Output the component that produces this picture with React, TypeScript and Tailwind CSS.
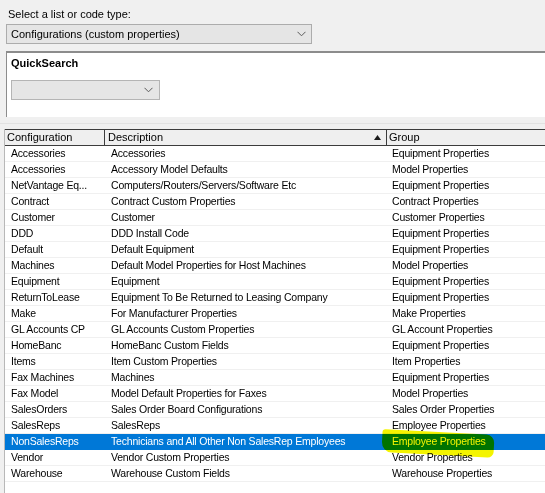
import React from "react";

interface Row {
  name: string;
  description: string;
  group: string;
  selected?: boolean;
}

const rows: Row[] = [
  { name: "Accessories", description: "Accessories", group: "Equipment Properties" },
  { name: "Accessories", description: "Accessory Model Defaults", group: "Model Properties" },
  { name: "NetVantage Eq...", description: "Computers/Routers/Servers/Software Etc", group: "Equipment Properties" },
  { name: "Contract", description: "Contract Custom Properties", group: "Contract Properties" },
  { name: "Customer", description: "Customer", group: "Customer Properties" },
  { name: "DDD", description: "DDD Install Code", group: "Equipment Properties" },
  { name: "Default", description: "Default Equipment", group: "Equipment Properties" },
  { name: "Machines", description: "Default Model Properties for Host Machines", group: "Model Properties" },
  { name: "Equipment", description: "Equipment", group: "Equipment Properties" },
  { name: "ReturnToLease", description: "Equipment To Be Returned to Leasing Company", group: "Equipment Properties" },
  { name: "Make", description: "For Manufacturer Properties", group: "Make Properties" },
  { name: "GL Accounts CP", description: "GL Accounts Custom Properties", group: "GL Account Properties" },
  { name: "HomeBanc", description: "HomeBanc Custom Fields", group: "Equipment Properties" },
  { name: "Items", description: "Item Custom Properties", group: "Item Properties" },
  { name: "Fax Machines", description: "Machines", group: "Equipment Properties" },
  { name: "Fax Model", description: "Model Default Properties for Faxes", group: "Model Properties" },
  { name: "SalesOrders", description: "Sales Order Board Configurations", group: "Sales Order Properties" },
  { name: "SalesReps", description: "SalesReps", group: "Employee Properties" },
  { name: "NonSalesReps", description: "Technicians and All Other Non SalesRep Employees", group: "Employee Properties", selected: true },
  { name: "Vendor", description: "Vendor Custom Properties", group: "Vendor Properties" },
  { name: "Warehouse", description: "Warehouse Custom Fields", group: "Warehouse Properties" },
];

function Chevron() {
  return (
    <svg width="9" height="6" viewBox="0 0 9 6" className="shrink-0">
      <polyline points="0.5,0.8 4.5,4.8 8.5,0.8" fill="none" stroke="#5a5a5a" strokeWidth="1" />
    </svg>
  );
}

export default function App() {
  return (
    <div className="relative w-[545px] h-[493px] overflow-hidden bg-[#f0f0f0] text-black font-['Liberation_Sans',Arial,sans-serif]">
      <div className="pl-[8px] pt-[8px] text-[11px] leading-[12px]">Select a list or code type:</div>

      {/* list type combo */}
      <div className="ml-[6px] mt-[4px] w-[306px] h-[20px] flex items-center justify-between pl-[4px] pr-[5px] bg-[#e5e5e5] border border-[#acacac] text-[11px]">
        <span>Configurations (custom properties)</span>
        <Chevron />
      </div>

      {/* QuickSearch panel */}
      <div className="ml-[6px] mt-[7px] h-[66px] bg-white border-t-2 border-l border-[#8c8c8c] pl-[4px] pt-[4px]">
        <div className="text-[11px] leading-[13px] font-bold">QuickSearch</div>
        <div className="mt-[10px] w-[149px] h-[20px] flex items-center justify-end pr-[6px] bg-[#e5e5e5] border border-[#b4b4b4]">
          <Chevron />
        </div>
      </div>

      <div className="h-[6px]" />
      <div className="h-px bg-[#e2e2e2]" />
      <div className="h-[5px]" />

      {/* grid */}
      <div className="ml-[4px] bg-white border-l border-[#b8b8b8] h-[400px]">
        <div className="grid grid-cols-[100px_282px_1fr] h-[17px] border-t border-b border-[#3c3c3c] bg-[#efefef] text-[11px] leading-[15px]">
          <div className="pl-[2px] border-r border-[#3c3c3c]">Configuration</div>
          <div className="relative pl-[3px] border-r border-[#3c3c3c]">
            Description
            <svg width="7" height="5" viewBox="0 0 7 5" className="absolute right-[5px] top-[5px]">
              <polygon points="0,5 3.5,0 7,5" fill="#1a1a1a" />
            </svg>
          </div>
          <div className="pl-[2px]">Group</div>
        </div>

        {rows.map((row, i) => (
          <div
            key={i}
            className={`grid grid-cols-[100px_282px_1fr] h-[16px] border-b text-[10.5px] leading-[15px] tracking-[-0.2px] whitespace-nowrap ${
              row.selected ? "bg-[#0078d7] text-white border-[#0078d7]" : "border-[#f0f0f0]"
            }`}
          >
            <div className="pl-[6px] overflow-hidden">{row.name}</div>
            <div className="pl-[6px] overflow-hidden">{row.description}</div>
            <div className="pl-[5px] overflow-hidden">{row.group}</div>
          </div>
        ))}
      </div>

      {/* yellow marker scribble over the selected group */}
      <div className="absolute left-[382px] top-[432px] w-[112px] h-[23px] rounded-tl-[3px] rounded-tr-[8px] rounded-br-[6px] rounded-bl-[10px] rotate-[3deg] bg-[#f4f400] mix-blend-multiply pointer-events-none" />
    </div>
  );
}
